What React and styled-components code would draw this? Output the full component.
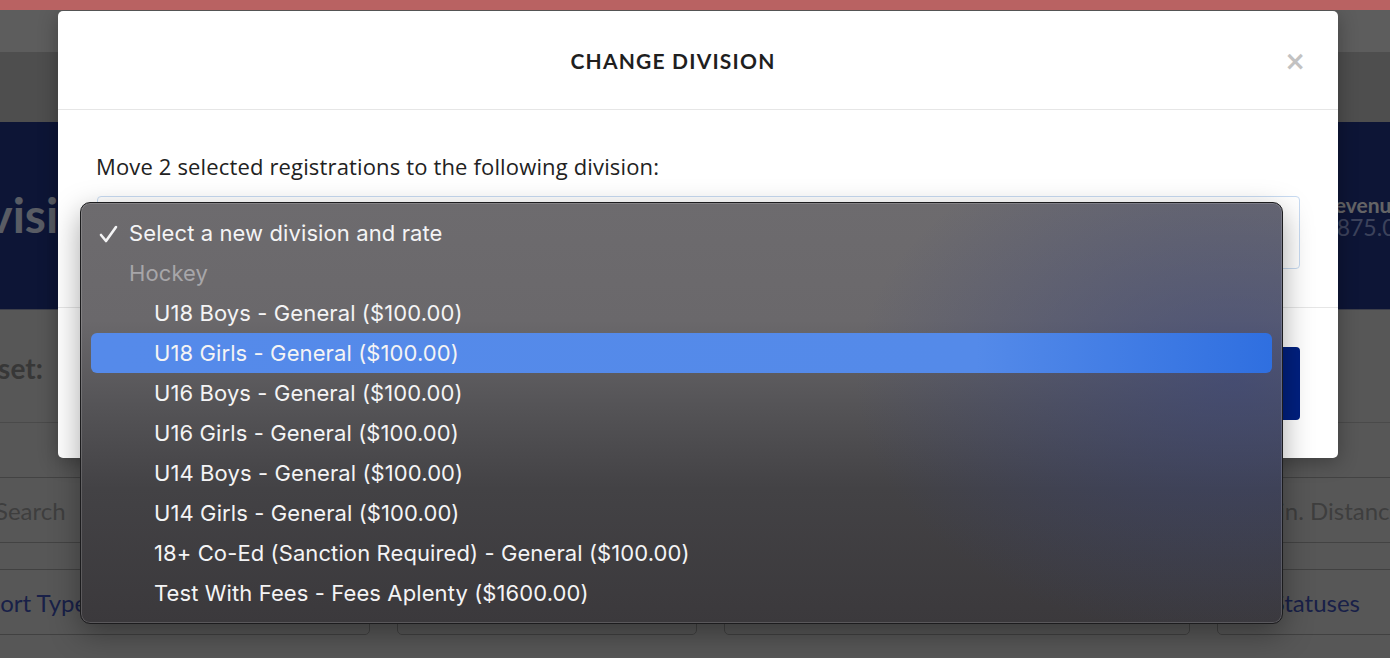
import React from 'react';
import styled, { createGlobalStyle } from 'styled-components';

const GlobalStyle = createGlobalStyle`
  html, body {
    margin: 0;
    padding: 0;
    background: #dadada;
    font-family: Lato, "Open Sans", sans-serif;
  }
`;

const Screen = styled.div`
  position: relative;
  width: 1390px;
  height: 658px;
  overflow: hidden;
  background: #dadada;
`;

const AlertBar = styled.div`
  position: relative;
  z-index: 3;
  height: 10px;
  background: #b96262;
`;

/* page behind the dialog */

const Page = styled.div`
  display: flex;
  flex-direction: column;
`;

const Nav = styled.div`
  height: 42px;
  background: #e8e8e8;
`;

const SubHeader = styled.div`
  height: 70px;
  background: #c4c4c4;
`;

const Hero = styled.div`
  height: 188px;
  background: #213587;
  display: flex;
  align-items: center;
  justify-content: space-between;
  border-bottom: 1px solid #9a9fb8;
  box-sizing: border-box;
`;

const HeroTitle = styled.h1`
  margin: -2px 0 0 -61px;
  font-size: 48px;
  font-weight: 700;
  color: #dfe5fa;
`;

const Stat = styled.div`
  display: flex;
  flex-direction: column;
  margin: 0 -44px 0 0;
  width: 112px;
  font-size: 21px;
  line-height: 23px;
`;

const StatLabel = styled.span`
  font-weight: 700;
  color: #fafaff;
`;

const StatValue = styled.span`
  font-size: 23px;
  margin-left: -12px;
  color: #97a6e4;
`;

const PresetRow = styled.div`
  height: 112px;
  display: flex;
  align-items: center;
  border-bottom: 1px solid #b8b8b8;
`;

const PresetLabel = styled.span`
  margin: 4px 0 0 -44px;
  font-size: 28px;
  font-weight: 700;
  color: #8a8a8a;
`;

const SearchRow = styled.div`
  margin-top: 54px;
  height: 66px;
  display: flex;
  align-items: center;
  justify-content: space-between;
  border-top: 1px solid #a8a8a8;
  border-bottom: 1px solid #a8a8a8;
  box-sizing: border-box;
  font-size: 24px;
  color: #9c9c9c;
`;

const Placeholder = styled.span`
  margin: 0 ${({ right }) => right || 0}px 0 ${({ left }) => left || 0}px;
  white-space: nowrap;
`;

const FilterRow = styled.div`
  margin-top: 26px;
  margin-left: -47px;
  display: grid;
  grid-template-columns: 417px 300px 466px 200px;
  gap: 27px;
`;

const FilterBox = styled.div`
  height: 66px;
  border: 1px solid #a4a4a4;
  border-radius: 5px;
  box-sizing: border-box;
  display: flex;
  align-items: center;
  padding-left: 20px;
  font-size: 24px;
  color: #3f52b4;
  white-space: nowrap;
`;

const Backdrop = styled.div`
  position: absolute;
  inset: 0;
  z-index: 1;
  background: rgba(0, 0, 0, 0.6);
`;

/* dialog */

const Modal = styled.div`
  position: absolute;
  z-index: 2;
  top: 11px;
  left: 58px;
  width: 1280px;
  background: #fff;
  border-radius: 5px;
  box-shadow: 0 4px 20px rgba(0, 0, 0, 0.3);
`;

const ModalHeader = styled.div`
  height: 99px;
  box-sizing: border-box;
  border-bottom: 1px solid #e6e6e6;
  display: flex;
  align-items: center;
  justify-content: center;
  position: relative;
`;

const ModalTitle = styled.h2`
  margin: 0 50px 0 0;
  font-size: 21px;
  font-weight: 700;
  letter-spacing: 1.2px;
  color: #1f1f1f;
`;

const Close = styled.button`
  position: absolute;
  right: 32px;
  top: 37px;
  border: none;
  background: none;
  padding: 0;
  font-family: "DejaVu Sans", sans-serif;
  font-size: 26px;
  font-weight: 700;
  line-height: 1;
  color: #c2c2c2;
`;

const ModalBody = styled.div`
  padding: 42px 38px 38px 39px;
  border-bottom: 1px solid #e6e6e6;
`;

const Prompt = styled.p`
  margin: 0 0 16px -1px;
  font-family: "Open Sans", Lato, sans-serif;
  font-size: 22px;
  letter-spacing: 0.15px;
  line-height: 28px;
  color: #222;
`;

const SelectWrap = styled.div`
  position: relative;
`;

const SelectBox = styled.div`
  height: 73px;
  border: 1px solid #c8dbf2;
  border-radius: 4px;
  box-sizing: border-box;
`;

const ModalFooter = styled.div`
  display: flex;
  justify-content: flex-end;
  padding: 39px 38px 38px;
`;

const PrimaryButton = styled.button`
  width: 150px;
  height: 73px;
  border: none;
  border-radius: 4px;
  background: #002080;
  color: #fff;
  font-family: inherit;
  font-size: 20px;
  font-weight: 700;
`;

/* native popup menu */

const Menu = styled.div`
  position: absolute;
  z-index: 5;
  top: 6px;
  left: -17px;
  width: 1203px;
  padding: 10px;
  box-sizing: border-box;
  border: 1px solid #1c1c1e;
  border-radius: 10px;
  background:
    radial-gradient(ellipse 380px 260px at 96% 42%, rgba(52, 66, 130, 0.55), rgba(52, 66, 130, 0) 100%),
    linear-gradient(180deg, #6d6b6e 0%, #6a686b 28%, #555457 48%, #434245 68%, #3b393c 100%);
  box-shadow: inset 0 0 0 1px rgba(255, 255, 255, 0.16), 0 10px 30px rgba(0, 0, 0, 0.35);
  font-family: Inter, "Noto Sans", sans-serif;
`;

const Option = styled.div`
  height: 40px;
  display: flex;
  align-items: center;
  padding-left: ${({ indent }) => indent}px;
  border-radius: 6px;
  font-size: 22px;
  letter-spacing: 0.1px;
  color: ${({ muted }) => (muted ? '#a7a6a9' : '#f4f4f5')};
  background: ${({ active }) => (active ? 'linear-gradient(90deg, #558aea 0%, #548ae9 75%, #2f6fe0 100%)' : 'transparent')};
  position: relative;
`;

const Check = styled.svg`
  position: absolute;
  left: 8px;
  top: 12px;
`;

const options = [
  'U18 Boys - General ($100.00)',
  'U18 Girls - General ($100.00)',
  'U16 Boys - General ($100.00)',
  'U16 Girls - General ($100.00)',
  'U14 Boys - General ($100.00)',
  'U14 Girls - General ($100.00)',
  '18+ Co-Ed (Sanction Required) - General ($100.00)',
  'Test With Fees - Fees Aplenty ($1600.00)',
];

export default function App() {
  return (
    <Screen>
      <GlobalStyle />
      <AlertBar />
      <Page>
        <Nav />
        <SubHeader />
        <Hero>
          <HeroTitle>Division</HeroTitle>
          <Stat>
            <StatLabel>Revenue</StatLabel>
            <StatValue>$5875.00</StatValue>
          </Stat>
        </Hero>
        <PresetRow>
          <PresetLabel>Preset:</PresetLabel>
        </PresetRow>
        <SearchRow>
          <Placeholder left={-5}>Search</Placeholder>
          <Placeholder right={-12}>Min. Distance</Placeholder>
        </SearchRow>
        <FilterRow>
          <FilterBox>Sport Type</FilterBox>
          <FilterBox>Gender</FilterBox>
          <FilterBox>Age Group</FilterBox>
          <FilterBox>All Statuses</FilterBox>
        </FilterRow>
      </Page>
      <Backdrop />
      <Modal>
        <ModalHeader>
          <ModalTitle>CHANGE DIVISION</ModalTitle>
          <Close>×</Close>
        </ModalHeader>
        <ModalBody>
          <Prompt>Move 2 selected registrations to the following division:</Prompt>
          <SelectWrap>
            <SelectBox />
            <Menu>
              <Option indent={38}>
                <Check width="20" height="18" viewBox="0 0 20 18">
                  <polyline points="2,10 7,16 17,2" fill="none" stroke="#f4f4f5" strokeWidth="2.6" strokeLinecap="round" strokeLinejoin="round" />
                </Check>
                Select a new division and rate
              </Option>
              <Option indent={38} muted>Hockey</Option>
              {options.map((label) => (
                <Option key={label} indent={63} active={label.startsWith('U18 Girls')}>
                  {label}
                </Option>
              ))}
            </Menu>
          </SelectWrap>
        </ModalBody>
        <ModalFooter>
          <PrimaryButton>Move</PrimaryButton>
        </ModalFooter>
      </Modal>
    </Screen>
  );
}
